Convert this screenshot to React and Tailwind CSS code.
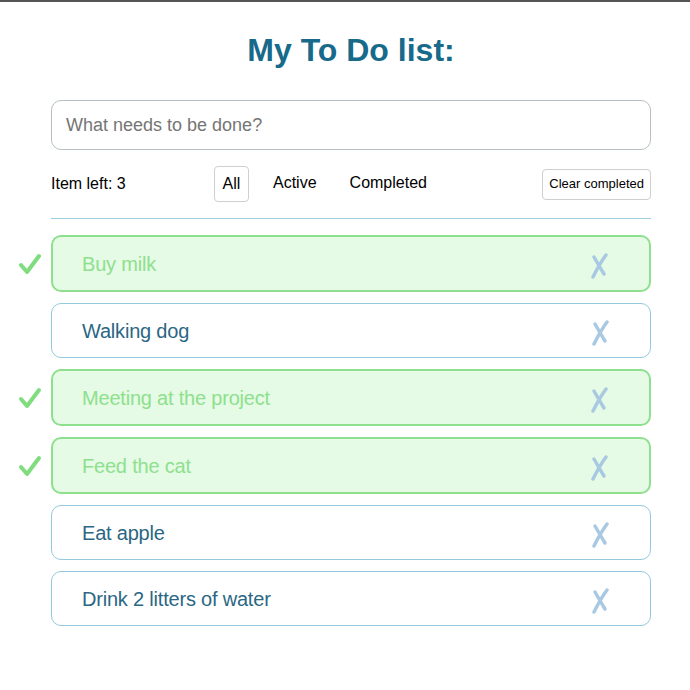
import { useState } from 'react';

const initialTodos = [
  { id: 1, text: 'Buy milk', done: true },
  { id: 2, text: 'Walking dog', done: false },
  { id: 3, text: 'Meeting at the project', done: true },
  { id: 4, text: 'Feed the cat', done: true },
  { id: 5, text: 'Eat apple', done: false },
  { id: 6, text: 'Drink 2 litters of water', done: false }
];

function CheckMark() {
  return (
    <svg width="24" height="22" viewBox="0 0 24 22" fill="none" stroke="#7fdc7f" strokeWidth="4" strokeLinecap="round" strokeLinejoin="round">
      <path d="M3 12 L9 19 L21 3" />
    </svg>
  );
}

function CrossMark() {
  return (
    <svg width="20" height="26" viewBox="0 0 20 26" fill="none" stroke="#a9c9e2" strokeWidth="3.5" strokeLinecap="round">
      <path d="M17 2 Q11 10 4 24" />
      <path d="M5 4 Q9 11 15 21" />
    </svg>
  );
}

function TodoItem({ todo }) {
  return (
    <div className="relative mb-[11px]">
      {todo.done ? (
        <span className="absolute -left-[33px] top-1/2 -translate-y-1/2">
          <CheckMark />
        </span>
      ) : null}
      <div
        className={`flex items-center justify-between rounded-[10px] pr-[40px] ${
          todo.done
            ? 'h-[57px] border-2 border-[#8ee08e] bg-[#e5fbe5] pl-[29px] text-[#8ee08e]'
            : 'h-[55px] border border-[#94c9dd] bg-white pl-[30px] text-[#2b6784]'
        }`}
      >
        <span className="text-[20px] tracking-[-0.2px]">{todo.text}</span>
        <span className="mt-[5px]">
          <CrossMark />
        </span>
      </div>
    </div>
  );
}

export default function App() {
  const [todos] = useState(initialTodos);
  const left = todos.filter((t) => !t.done).length;

  return (
    <div className="min-h-[690px] border-t-2 border-[#555] bg-white font-['Liberation_Sans',Arial,sans-serif]">
      <div className="ml-[51px] w-[600px] pt-[30px]">
        <h1 className="text-center text-[32px] font-bold leading-[37px] text-[#176a8a]">My To Do list:</h1>

        <input
          type="text"
          placeholder="What needs to be done?"
          className="mt-[31px] h-[50px] w-full rounded-[10px] border border-[#b6bfc3] px-[14px] text-[18px] text-[#333] outline-none placeholder:text-[#757575]"
        />

        <div className="mt-4 flex h-[36px] items-center text-[16px] text-black">
          <span className="w-[163px]">Item left: {left}</span>
          <button type="button" className="h-[36px] w-[35px] rounded-[4px] border border-[#cfcfcf] bg-white">
            All
          </button>
          <span className="ml-6 -mt-[3px]">Active</span>
          <span className="ml-[33px] -mt-[3px]">Completed</span>
          <button
            type="button"
            className="ml-auto h-[31px] rounded-[4px] border border-[#cfcfcf] bg-white px-[6px] text-[13px]"
          >
            Clear completed
          </button>
        </div>

        <div className="mb-4 mt-4 border-t border-[#9dcfe0]" />

        <div className="flex flex-col">
          {todos.map((todo) => (
            <TodoItem key={todo.id} todo={todo} />
          ))}
        </div>
      </div>
    </div>
  );
}
